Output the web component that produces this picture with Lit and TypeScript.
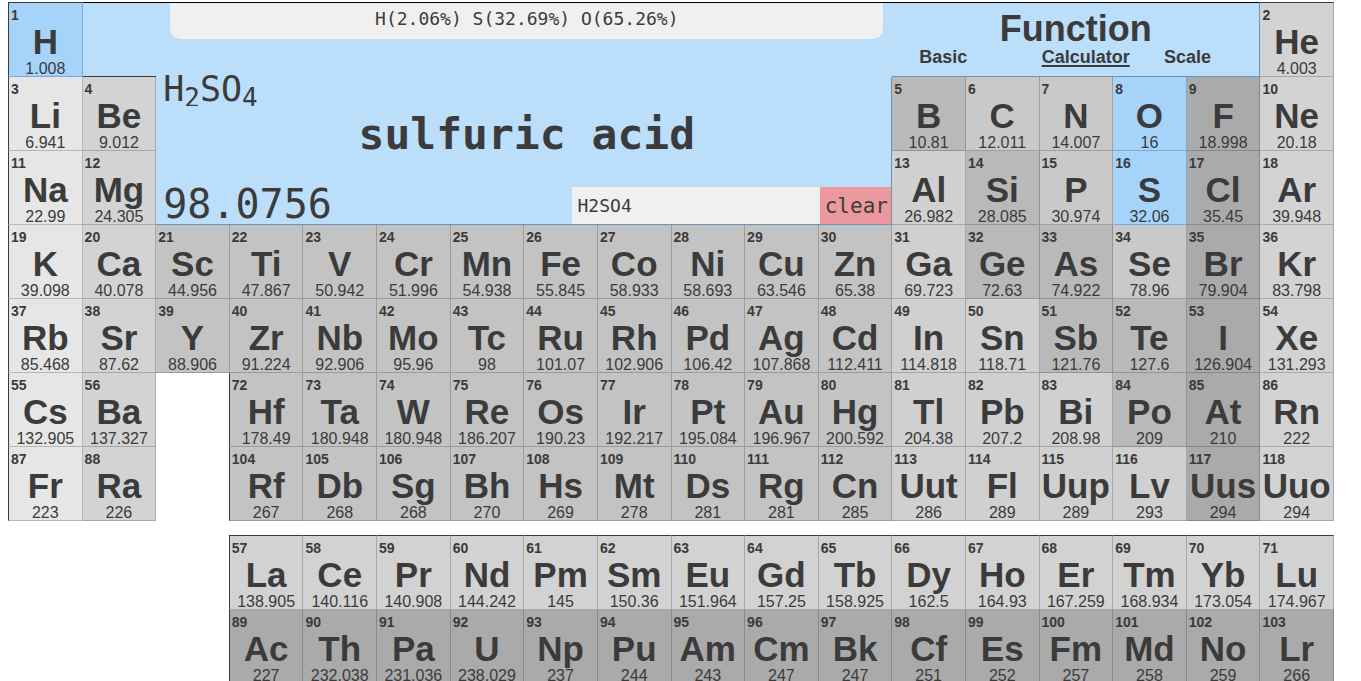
import { LitElement, html, css } from "lit";
import { customElement, property, state } from "lit/decorators.js";
import { classMap } from "lit/directives/class-map.js";

type Family =
  | "alkali" | "alkaline" | "transition" | "metalloid" | "nonmetal"
  | "halogen" | "noble" | "metal" | "lanthanide" | "actinide";

interface Run {
  row: number;
  column: number;
  family: Family;
  first: number;
  items: string;
}

// Consecutive elements of one family, as "symbol mass" pairs.
const MAIN: Run[] = [
  { row: 1, column: 1, family: "nonmetal", first: 1, items: "H 1.008" },
  { row: 1, column: 18, family: "noble", first: 2, items: "He 4.003" },
  { row: 2, column: 1, family: "alkali", first: 3, items: "Li 6.941" },
  { row: 2, column: 2, family: "alkaline", first: 4, items: "Be 9.012" },
  { row: 2, column: 13, family: "metalloid", first: 5, items: "B 10.81" },
  { row: 2, column: 14, family: "nonmetal", first: 6, items: "C 12.011 N 14.007 O 16" },
  { row: 2, column: 17, family: "halogen", first: 9, items: "F 18.998" },
  { row: 2, column: 18, family: "noble", first: 10, items: "Ne 20.18" },
  { row: 3, column: 1, family: "alkali", first: 11, items: "Na 22.99" },
  { row: 3, column: 2, family: "alkaline", first: 12, items: "Mg 24.305" },
  { row: 3, column: 13, family: "metal", first: 13, items: "Al 26.982" },
  { row: 3, column: 14, family: "metalloid", first: 14, items: "Si 28.085" },
  { row: 3, column: 15, family: "nonmetal", first: 15, items: "P 30.974 S 32.06" },
  { row: 3, column: 17, family: "halogen", first: 17, items: "Cl 35.45" },
  { row: 3, column: 18, family: "noble", first: 18, items: "Ar 39.948" },
  { row: 4, column: 1, family: "alkali", first: 19, items: "K 39.098" },
  { row: 4, column: 2, family: "alkaline", first: 20, items: "Ca 40.078" },
  { row: 4, column: 3, family: "transition", first: 21, items: "Sc 44.956 Ti 47.867 V 50.942 Cr 51.996 Mn 54.938 Fe 55.845 Co 58.933 Ni 58.693 Cu 63.546 Zn 65.38" },
  { row: 4, column: 13, family: "metal", first: 31, items: "Ga 69.723" },
  { row: 4, column: 14, family: "metalloid", first: 32, items: "Ge 72.63 As 74.922" },
  { row: 4, column: 16, family: "nonmetal", first: 34, items: "Se 78.96" },
  { row: 4, column: 17, family: "halogen", first: 35, items: "Br 79.904" },
  { row: 4, column: 18, family: "noble", first: 36, items: "Kr 83.798" },
  { row: 5, column: 1, family: "alkali", first: 37, items: "Rb 85.468" },
  { row: 5, column: 2, family: "alkaline", first: 38, items: "Sr 87.62" },
  { row: 5, column: 3, family: "transition", first: 39, items: "Y 88.906 Zr 91.224 Nb 92.906 Mo 95.96 Tc 98 Ru 101.07 Rh 102.906 Pd 106.42 Ag 107.868 Cd 112.411" },
  { row: 5, column: 13, family: "metal", first: 49, items: "In 114.818 Sn 118.71" },
  { row: 5, column: 15, family: "metalloid", first: 51, items: "Sb 121.76 Te 127.6" },
  { row: 5, column: 17, family: "halogen", first: 53, items: "I 126.904" },
  { row: 5, column: 18, family: "noble", first: 54, items: "Xe 131.293" },
  { row: 6, column: 1, family: "alkali", first: 55, items: "Cs 132.905" },
  { row: 6, column: 2, family: "alkaline", first: 56, items: "Ba 137.327" },
  { row: 6, column: 4, family: "transition", first: 72, items: "Hf 178.49 Ta 180.948 W 180.948 Re 186.207 Os 190.23 Ir 192.217 Pt 195.084 Au 196.967 Hg 200.592" },
  { row: 6, column: 13, family: "metal", first: 81, items: "Tl 204.38 Pb 207.2 Bi 208.98" },
  { row: 6, column: 16, family: "metalloid", first: 84, items: "Po 209" },
  { row: 6, column: 17, family: "halogen", first: 85, items: "At 210" },
  { row: 6, column: 18, family: "noble", first: 86, items: "Rn 222" },
  { row: 7, column: 1, family: "alkali", first: 87, items: "Fr 223" },
  { row: 7, column: 2, family: "alkaline", first: 88, items: "Ra 226" },
  { row: 7, column: 4, family: "transition", first: 104, items: "Rf 267 Db 268 Sg 268 Bh 270 Hs 269 Mt 278 Ds 281 Rg 281 Cn 285" },
  { row: 7, column: 13, family: "metal", first: 113, items: "Uut 286 Fl 289 Uup 289 Lv 293" },
  { row: 7, column: 17, family: "halogen", first: 117, items: "Uus 294" },
  { row: 7, column: 18, family: "noble", first: 118, items: "Uuo 294" },
];

const INNER: Run[] = [
  { row: 1, column: 4, family: "lanthanide", first: 57, items: "La 138.905 Ce 140.116 Pr 140.908 Nd 144.242 Pm 145 Sm 150.36 Eu 151.964 Gd 157.25 Tb 158.925 Dy 162.5 Ho 164.93 Er 167.259 Tm 168.934 Yb 173.054 Lu 174.967" },
  { row: 2, column: 4, family: "actinide", first: 89, items: "Ac 227 Th 232.038 Pa 231.036 U 238.029 Np 237 Pu 244 Am 243 Cm 247 Bk 247 Cf 251 Es 252 Fm 257 Md 258 No 259 Lr 266" },
];

interface Entry {
  row: number;
  column: number;
  family: Family;
  number: number;
  symbol: string;
  mass: string;
}

function expand(runs: Run[]): Entry[] {
  return runs.flatMap(({ row, column, family, first, items }) => {
    const words = items.split(" ");
    return Array.from({ length: words.length / 2 }, (_, i) => ({
      row,
      column: column + i,
      family,
      number: first + i,
      symbol: words[i * 2],
      mass: words[i * 2 + 1],
    }));
  });
}

@customElement("element-cell")
class ElementCell extends LitElement {
  @property({ attribute: false }) entry!: Entry;
  @property({ type: Boolean }) selected = false;
  @property({ type: Boolean }) top = false;

  static styles = css`
    :host {
      display: grid;
      min-width: 0;
    }
    .cell {
      display: flex;
      flex-direction: column;
      justify-content: flex-start;
      min-width: 0;
      margin: 0;
      padding: 4px 0 0;
      border: 0 solid rgba(0, 0, 0, 0.2);
      border-right-width: 1px;
      border-bottom-width: 1px;
      border-radius: 0;
      color: #3b3b3b;
      font-family: "Liberation Sans", Arial, sans-serif;
      text-align: center;
      cursor: pointer;
    }
    .edge-left {
      margin-left: -1px;
      border-left: 1px solid #3b3b3b;
    }
    .edge-top {
      margin-top: -1px;
      border-top: 1px solid #3b3b3b;
    }
    .alkali { background: #e6e6e6; }
    .alkaline, .noble { background: #d3d3d3; }
    .transition { background: #c3c3c3; }
    .metalloid { background: #b9b9b9; }
    .nonmetal { background: #c9c9c9; }
    .halogen, .actinide { background: #aaaaaa; }
    .metal { background: #d0d0d0; }
    .lanthanide { background: #d2d2d2; }
    .selected {
      border-right-color: #7aa9d4;
      border-bottom-color: #7aa9d4;
      background: #a5d3fa;
    }
    .number {
      padding-left: 2px;
      font-size: 14px;
      font-weight: bold;
      line-height: 16px;
      text-align: left;
    }
    .symbol {
      font-size: 35px;
      font-weight: bold;
      line-height: 38px;
    }
    .mass {
      font-size: 16px;
      line-height: 15px;
    }
  `;

  render() {
    const { number, symbol, mass, family, column } = this.entry;
    const classes = {
      cell: true,
      [family]: !this.selected,
      selected: this.selected,
      "edge-left": column === 1 || (column === 4 && number > 56),
      "edge-top": this.top,
    };
    return html`<button class=${classMap(classes)} type="button">
      <span class="number">${number}</span>
      <span class="symbol">${symbol}</span>
      <span class="mass">${mass}</span>
    </button>`;
  }
}

@customElement("app-root")
class AppRoot extends LitElement {
  @state() private formula = "H2SO4";

  static styles = css`
    :host {
      display: block;
      padding: 2px 27px 0 8px;
      color: #3b3b3b;
      font-family: "Liberation Sans", Arial, sans-serif;
    }
    .table {
      display: grid;
      grid-template-columns: repeat(18, minmax(0, 1fr));
      grid-auto-rows: 74px;
      padding: 1px 0 0 1px;
    }
    .inner {
      margin-top: 14px;
    }
    .panel {
      box-sizing: border-box;
      background: #bbdefb;
      border: 0 solid #6f93b3;
    }
    .spacer {
      grid-area: 1 / 2 / 2 / 3;
      border-bottom: 1px solid #3b3b3b;
    }
    .display {
      grid-area: 1 / 3 / 4 / 13;
      display: flex;
      flex-direction: column;
      padding-left: 5px;
      border-bottom-width: 1px;
      font-family: "DejaVu Sans Mono", monospace;
    }
    .join {
      grid-area: 2 / 12 / 4 / 13;
      border-right: 1px solid #6f93b3;
      pointer-events: none;
      z-index: 1;
    }
    .composition {
      margin: 0 9px;
      padding-bottom: 4px;
      border-radius: 0 0 10px 10px;
      background: #f0f0f0;
      font-size: 18px;
      line-height: 32px;
      text-align: center;
    }
    .formula {
      height: 38px;
      margin: 29px 0 0;
      padding-left: 2px;
      overflow: hidden;
      font-size: 35px;
      line-height: 42px;
    }
    .formula sub {
      font-size: 26px;
      line-height: 0;
      vertical-align: -6px;
    }
    .name {
      margin: 3px 0 0;
      font-size: 43px;
      line-height: 50px;
      text-align: center;
    }
    .bottom {
      display: flex;
      justify-content: space-between;
      align-items: flex-end;
      margin-top: auto;
      padding-left: 2px;
    }
    .total {
      font-size: 40px;
      line-height: 40px;
    }
    .entry {
      display: flex;
      flex: 0 0 44%;
      height: 37px;
    }
    .input {
      flex: 1;
      min-width: 0;
      padding: 0 6px;
      border: 0;
      border-radius: 0;
      outline: 0;
      background: #f0f0f0;
      color: inherit;
      font: 18px "DejaVu Sans Mono", monospace;
    }
    .clear {
      flex: 0 0 72px;
      padding: 0;
      border: 0;
      background: #eb989f;
      color: inherit;
      font: 21px "DejaVu Sans Mono", monospace;
    }
    .functions {
      grid-area: 1 / 13 / 2 / 18;
      padding-top: 8px;
      border-width: 0 1px 1px 0;
    }
    .edge-top {
      margin-top: -1px;
      border-top: 1px solid #000;
    }
    .title {
      margin: 0;
      font-size: 36px;
      line-height: 36px;
      text-align: center;
    }
    .modes {
      display: grid;
      grid-template-columns: repeat(3, minmax(0, 1fr));
      font-size: 18px;
      font-weight: bold;
      line-height: 20px;
    }
    .slot {
      padding-left: 27px;
    }
    .mode {
      color: inherit;
      text-decoration: none;
    }
    .current {
      text-decoration: underline 2px;
      text-underline-offset: 2px;
    }
  `;

  private cells(runs: Run[]) {
    const used = this.formula.match(/[A-Z][a-z]*/g) ?? [];
    return expand(runs).map(
      (entry) => html`<element-cell
        style="grid-area: ${entry.row} / ${entry.column}"
        .entry=${entry}
        .selected=${used.includes(entry.symbol)}
        .top=${entry.row === 1}
      ></element-cell>`
    );
  }

  private typeset() {
    return (this.formula.match(/\d+|\D+/g) ?? []).map((part) =>
      /\d/.test(part) ? html`<sub>${part}</sub>` : part
    );
  }

  render() {
    return html`
      <main>
        <div class="table">
          <div class="panel spacer edge-top"></div>
          <section class="panel display edge-top" aria-label="Molar mass">
            <div class="composition">H(2.06%) S(32.69%) O(65.26%)</div>
            <p class="formula">${this.typeset()}</p>
            <h2 class="name">sulfuric acid</h2>
            <div class="bottom">
              <output class="total" for="formula">98.0756</output>
              <div class="entry">
                <input
                  class="input"
                  id="formula"
                  type="text"
                  aria-label="Formula"
                  .value=${this.formula}
                  @input=${(e: Event) => (this.formula = (e.target as HTMLInputElement).value)}
                />
                <button class="clear" type="button" @click=${() => (this.formula = "")}>clear</button>
              </div>
            </div>
          </section>
          <div class="join"></div>
          <section class="panel functions edge-top">
            <h1 class="title">Function</h1>
            <nav class="modes">
              <span class="slot"><a class="mode" href="#basic">Basic</a></span>
              <span class="slot"><a class="mode current" href="#calculator" aria-current="page">Calculator</a></span>
              <span class="slot"><a class="mode" href="#scale">Scale</a></span>
            </nav>
          </section>
          ${this.cells(MAIN)}
        </div>
        <div class="table inner">${this.cells(INNER)}</div>
      </main>
    `;
  }
}
